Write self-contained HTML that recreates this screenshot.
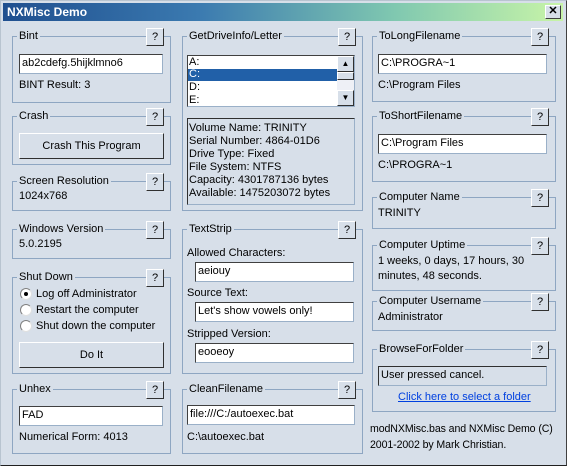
<!DOCTYPE html>
<html><head><style>
*{margin:0;padding:0;box-sizing:border-box}
body{width:567px;height:466px;background:#d7dfe9;font-family:"Liberation Sans",sans-serif;font-size:11px;color:#000;position:relative;overflow:hidden}
.win{position:absolute;left:0;top:0;width:567px;height:466px;border:1px solid #b8c4d0;border-right-color:#404040;border-bottom-color:#202020}
.title{position:absolute;left:3px;top:3px;width:560px;height:18px;background:linear-gradient(90deg,#1f4f8f 0%,#3b7ab0 35%,#80c8b0 70%,#c8f4a8 100%);color:#fff;font-weight:bold;font-size:12px;line-height:18px;padding-left:4px}
.x{position:absolute;right:6px;top:5px;width:16px;height:14px;background:#d7dfe9;border:1px solid #fff;border-right-color:#404040;border-bottom-color:#404040;font-size:11px;font-weight:bold;line-height:11px;text-align:center}
.g{position:absolute;border:1px solid #8ea6c2}
.g .l{position:absolute;left:4px;top:-8px;background:#d7dfe9;padding:0 2px;line-height:14px}
.h{position:absolute;right:6px;top:-9px;width:18px;height:18px;background:#d7dfe9;border:1px solid #fff;border-right-color:#303030;border-bottom-color:#303030;text-align:center;line-height:16px}
.t{position:absolute;line-height:14px;white-space:nowrap}
.tb{position:absolute;background:#fff;border:1px solid #9ab0c8;border-top-color:#404040;border-left-color:#404040;padding-left:2px;line-height:17px;height:20px;white-space:nowrap}
.btn{position:absolute;background:#d7dfe9;border:1px solid #fff;border-right-color:#303030;border-bottom-color:#303030;text-align:center;line-height:24px}
.rad{position:absolute;width:12px;height:12px;border-radius:50%;background:#fff;border:1px solid #808080;border-right-color:#e0e0e0;border-bottom-color:#e0e0e0}
</style></head><body>
<div class="win"></div>
<div class="title">NXMisc Demo</div>
<div class="x">✕</div>

<!-- left column -->
<div class="g" style="left:12px;top:36px;width:159px;height:67px"><span class="l">Bint</span><div class="h">?</div></div>
<div class="tb" style="left:19px;top:54px;width:144px">ab2cdefg.5hijklmno6</div>
<div class="t" style="left:19px;top:78px">BINT Result: 3</div>

<div class="g" style="left:12px;top:116px;width:159px;height:49px"><span class="l">Crash</span><div class="h">?</div></div>
<div class="btn" style="left:19px;top:133px;width:145px;height:26px">Crash This Program</div>

<div class="g" style="left:12px;top:181px;width:159px;height:30px"><span class="l">Screen Resolution</span><div class="h">?</div></div>
<div class="t" style="left:19px;top:189px">1024x768</div>

<div class="g" style="left:12px;top:229px;width:159px;height:30px"><span class="l">Windows Version</span><div class="h">?</div></div>
<div class="t" style="left:19px;top:237px">5.0.2195</div>

<div class="g" style="left:12px;top:277px;width:159px;height:97px"><span class="l">Shut Down</span><div class="h">?</div></div>
<div class="rad" style="left:20px;top:288px"><div style="position:absolute;left:3px;top:3px;width:4px;height:4px;background:#000;border-radius:50%"></div></div>
<div class="t" style="left:36px;top:287px">Log off Administrator</div>
<div class="rad" style="left:20px;top:304px"></div>
<div class="t" style="left:36px;top:303px">Restart the computer</div>
<div class="rad" style="left:20px;top:320px"></div>
<div class="t" style="left:36px;top:319px">Shut down the computer</div>
<div class="btn" style="left:19px;top:342px;width:145px;height:26px">Do It</div>

<div class="g" style="left:12px;top:389px;width:159px;height:65px"><span class="l">Unhex</span><div class="h">?</div></div>
<div class="tb" style="left:19px;top:406px;width:144px">FAD</div>
<div class="t" style="left:19px;top:430px">Numerical Form: 4013</div>

<!-- middle column -->
<div class="g" style="left:182px;top:36px;width:181px;height:175px"><span class="l">GetDriveInfo/Letter</span><div class="h">?</div></div>
<div style="position:absolute;left:187px;top:55px;width:168px;height:52px;background:#fff;border:1px solid #9ab0c8;border-top-color:#404040;border-left-color:#404040"></div>
<div class="t" style="left:189px;top:56px;line-height:13px">A:</div>
<div style="position:absolute;left:188px;top:69px;width:149px;height:12px;background:#2160a8"></div>
<div class="t" style="left:189px;top:68px;line-height:13px;color:#fff">C:</div>
<div class="t" style="left:189px;top:81px;line-height:13px">D:</div>
<div class="t" style="left:189px;top:94px;line-height:13px">E:</div>
<div style="position:absolute;left:337px;top:56px;width:17px;height:50px;background:#eef0f6"></div>
<div class="btn" style="left:337px;top:56px;width:17px;height:16px;line-height:14px;font-size:8px">▲</div>
<div class="btn" style="left:337px;top:72px;width:17px;height:8px"></div>
<div class="btn" style="left:337px;top:90px;width:17px;height:16px;line-height:14px;font-size:8px">▼</div>
<div style="position:absolute;left:187px;top:118px;width:168px;height:87px;border:1px solid #9ab0c8;border-top-color:#303030;border-left-color:#303030"></div>
<div class="t" style="left:189px;top:122px;line-height:13px">Volume Name: TRINITY<br>Serial Number: 4864-01D6<br>Drive Type: Fixed<br>File System: NTFS<br>Capacity: 4301787136 bytes<br>Available: 1475203072 bytes</div>

<div class="g" style="left:182px;top:229px;width:181px;height:145px"><span class="l">TextStrip</span><div class="h">?</div></div>
<div class="t" style="left:187px;top:246px">Allowed Characters:</div>
<div class="tb" style="left:195px;top:262px;width:159px">aeiouy</div>
<div class="t" style="left:187px;top:286px">Source Text:</div>
<div class="tb" style="left:195px;top:302px;width:159px">Let's show vowels only!</div>
<div class="t" style="left:187px;top:327px">Stripped Version:</div>
<div class="tb" style="left:195px;top:343px;width:159px">eooeoy</div>

<div class="g" style="left:182px;top:389px;width:181px;height:65px"><span class="l">CleanFilename</span><div class="h">?</div></div>
<div class="tb" style="left:187px;top:405px;width:168px">file:///C:/autoexec.bat</div>
<div class="t" style="left:187px;top:430px">C:\autoexec.bat</div>

<!-- right column -->
<div class="g" style="left:372px;top:36px;width:184px;height:66px"><span class="l">ToLongFilename</span><div class="h">?</div></div>
<div class="tb" style="left:378px;top:54px;width:169px">C:\PROGRA~1</div>
<div class="t" style="left:378px;top:78px">C:\Program Files</div>

<div class="g" style="left:372px;top:116px;width:184px;height:66px"><span class="l">ToShortFilename</span><div class="h">?</div></div>
<div class="tb" style="left:378px;top:134px;width:169px">C:\Program Files</div>
<div class="t" style="left:378px;top:158px">C:\PROGRA~1</div>

<div class="g" style="left:372px;top:197px;width:184px;height:32px"><span class="l">Computer Name</span><div class="h">?</div></div>
<div class="t" style="left:378px;top:206px">TRINITY</div>

<div class="g" style="left:372px;top:245px;width:184px;height:46px"><span class="l">Computer Uptime</span><div class="h">?</div></div>
<div class="t" style="left:378px;top:254px;line-height:15px">1 weeks, 0 days, 17 hours, 30<br>minutes, 48 seconds.</div>

<div class="g" style="left:372px;top:301px;width:184px;height:30px"><span class="l">Computer Username</span><div class="h">?</div></div>
<div class="t" style="left:378px;top:310px">Administrator</div>

<div class="g" style="left:372px;top:349px;width:184px;height:63px"><span class="l">BrowseForFolder</span><div class="h">?</div></div>
<div class="tb" style="left:378px;top:366px;width:169px;background:#d7dfe9;border-color:#303030 #9ab0c8 #9ab0c8 #303030">User pressed cancel.</div>
<div class="t" style="left:398px;top:390px;color:#0040e0;text-decoration:underline">Click here to select a folder</div>

<div class="t" style="left:370px;top:421px;line-height:16px;font-size:10.6px;letter-spacing:-0.1px">modNXMisc.bas and NXMisc Demo (C)<br>2001-2002 by Mark Christian.</div>
</body></html>
